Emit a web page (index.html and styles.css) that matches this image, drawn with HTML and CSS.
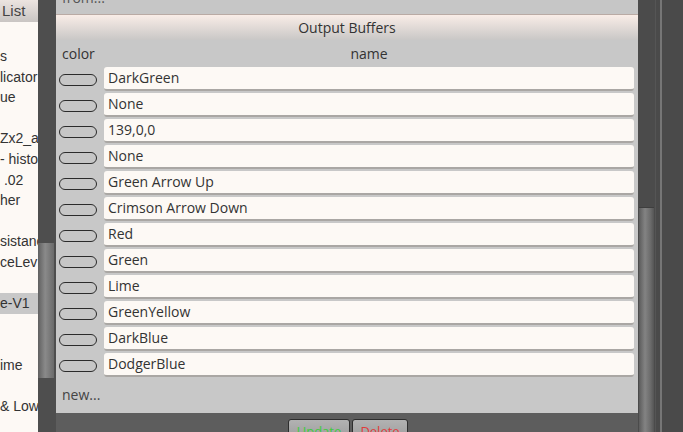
FILE: index.html
```html
<!DOCTYPE html>
<html lang="en">
<head>
  <meta charset="UTF-8" />
  <title>Output Buffers</title>
  <link rel="stylesheet" href="styles.css">
</head>
<body>

  <div class="sidebar">
    <div class="sidebar-head">List</div>
    <ul class="item-list">
      <li>s</li>
      <li>licator</li>
      <li>ue</li>
      <li></li>
      <li>Zx2_a</li>
      <li>- histo</li>
      <li>&nbsp;.02</li>
      <li>her</li>
      <li></li>
      <li>sistanc</li>
      <li>ceLev</li>
      <li></li>
      <li class="selected">e-V1</li>
      <li></li>
      <li></li>
      <li>ime</li>
      <li></li>
      <li>&amp; Low</li>
    </ul>
  </div>

  <div class="scrollbar left-bar"><div class="thumb"></div></div>

  <div class="main">
    <div class="top-strip"><span>from...</span></div>
    <div class="panel-head">Output Buffers</div>
    <div class="col-heads">
      <span class="col-color">color</span>
      <span class="col-name">name</span>
    </div>

    <div class="rows" id="rows"></div>

    <div class="new-row">new...</div>

    <div class="footer">
      <button class="btn btn-update">Update</button>
      <button class="btn btn-delete">Delete</button>
    </div>
  </div>

  <div class="scrollbar right-bar"><div class="thumb"></div></div>
  <div class="far-right"><div class="edge"></div></div>

<script>
  const names = [
    "DarkGreen", "None", "139,0,0", "None", "Green Arrow Up",
    "Crimson Arrow Down", "Red", "Green", "Lime", "GreenYellow",
    "DarkBlue", "DodgerBlue"
  ];
  const rows = document.getElementById("rows");
  names.forEach(name => {
    const row = document.createElement("div");
    row.className = "buffer-row";
    row.innerHTML = `<span class="swatch"></span><div class="name-field">${name}</div>`;
    rows.appendChild(row);
  });
</script>

</body>
</html>
```

FILE: styles.css
```css
html, body {
  margin: 0;
  height: 432px;
  overflow: hidden;
}
body {
  display: flex;
  font-family: 'Open Sans', 'Noto Sans', sans-serif;
  font-size: 14px;
  color: #333;
  background: #4a4a4a;
}

/* left list */
.sidebar {
  width: 38px;
  flex: none;
  background: #fdf9f5;
  overflow: hidden;
  font-family: 'Liberation Sans', Arial, sans-serif;
}
.sidebar-head {
  height: 22px;
  line-height: 22px;
  padding-left: 2px;
  font-size: 15px;
  color: #444;
  background: linear-gradient(#ece4e0, #c9c5c3);
  white-space: nowrap;
}
.item-list {
  list-style: none;
  margin: 0;
  padding: 24px 0 0;
}
.item-list li {
  height: 20.6px;
  line-height: 20.6px;
  font-size: 14px;
  color: #333;
  white-space: nowrap;
}
.item-list li.selected {
  background: #c8c8c8;
}

/* scrollbars */
.scrollbar {
  width: 18px;
  flex: none;
  background: #4e4e4e;
  display: flex;
  flex-direction: column;
}
.left-bar .thumb {
  margin-top: 243px;
  height: 135px;
  width: 16px;
  flex: none;
  background: linear-gradient(90deg, #606060, #8a8a8a 45%, #6a6a6a);
}
.right-bar {
  width: 17px;
  background: #4b4b4b;
}
.right-bar .thumb {
  margin-top: 207px;
  flex: 1;
  margin-left: 1px;
  width: 15px;
  border-top: 1px solid #3e3e3e;
  background: linear-gradient(90deg, #5c5c5c, #838383 40%, #6c6c6c 75%, #555);
}
.far-right {
  flex: 1;
  background: #4a4a4a;
  display: flex;
  padding-left: 4px;
  border-left: 1px solid #555;
}
.far-right .edge {
  width: 2px;
  background: #767676;
}

/* main panel */
.main {
  width: 582px;
  flex: none;
  display: flex;
  flex-direction: column;
  background: #c8c8c8;
}
.main > * {
  flex: none;
}
.top-strip {
  height: 14px;
  overflow: hidden;
  background: #c6c6c6;
  border-bottom: 1px solid #b9aaa4;
  padding-left: 6px;
}
.top-strip span {
  display: block;
  margin-top: -12px;
  line-height: 20px;
  color: #555;
}
.panel-head {
  height: 25px;
  line-height: 25px;
  text-align: center;
  background: linear-gradient(#f9ede7, #c9c7c6);
  color: #333;
}
.col-heads {
  height: 26px;
  display: flex;
  align-items: center;
}
.col-color {
  width: 48px;
  padding-left: 6px;
  box-sizing: border-box;
}
.col-name {
  flex: 1;
  text-align: center;
  margin-right: 4px;
}

.rows {
  display: flex;
  flex-direction: column;
  gap: 2px;
  margin-top: 1px;
}
.buffer-row {
  display: flex;
  align-items: center;
  height: 24px;
}
.swatch {
  width: 38px;
  height: 12px;
  margin: 1px 7px 0 3px;
  box-sizing: border-box;
  border: 1.5px solid #2b2b2b;
  border-radius: 6px;
  background: #c6c6c6;
}
.name-field {
  flex: 1;
  height: 24px;
  margin-right: 4px;
  box-sizing: border-box;
  line-height: 22px;
  padding-left: 4px;
  background: #fdf9f5;
  border-radius: 3px;
  border-bottom: 2px solid #aaa7a4;
  color: #333;
  white-space: nowrap;
}

.new-row {
  height: 36px;
  line-height: 36px;
  padding-left: 6px;
  color: #444;
}

.footer {
  height: 19px;
  overflow: hidden;
  background: #5d5d5d;
  display: flex;
  align-items: flex-start;
  padding: 6px 0 0 232px;
  gap: 2px;
}
.btn {
  flex: none;
  height: 24px;
  padding: 0;
  font-family: 'Open Sans', 'Noto Sans', sans-serif;
  font-size: 13px;
  line-height: 22px;
  border: 1px solid #2e2e2e;
  border-radius: 3px;
  background: linear-gradient(#b2b2b2, #9a9a9a);
}
.btn-update {
  width: 62px;
  color: #3ecb3e;
}
.btn-delete {
  width: 56px;
  color: #e23a3a;
}
```
